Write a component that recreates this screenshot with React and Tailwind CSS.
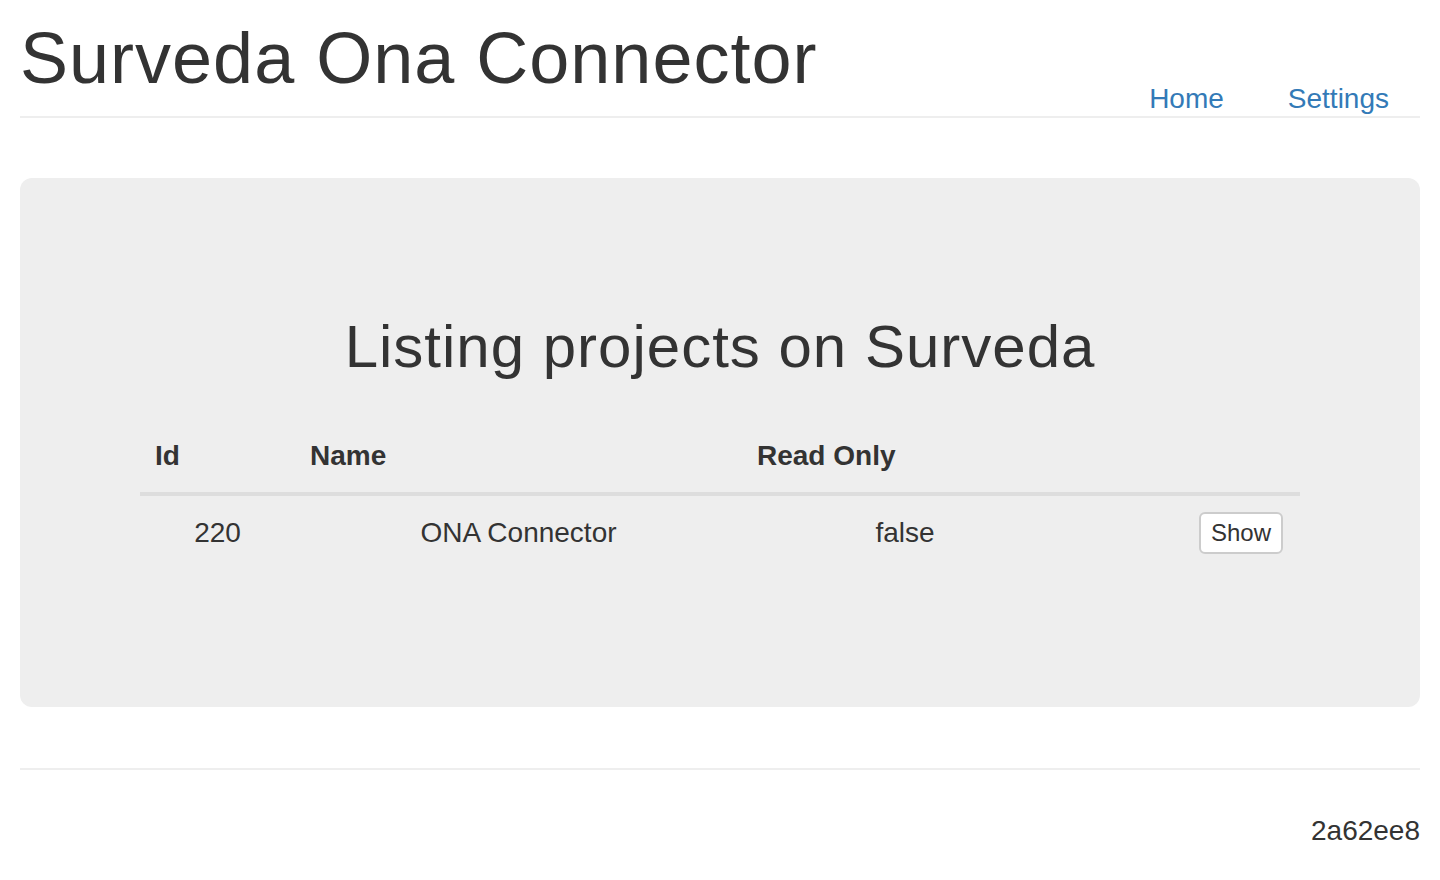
export default function App() {
  const projects = [{ id: 220, name: "ONA Connector", readOnly: false }];

  return (
    <div className="min-h-[880px] bg-white px-[20px] text-[#333] font-['Liberation_Sans',Arial,sans-serif]">
      <header className="flex items-end justify-between border-b-2 border-[#eee]">
        <h1 className="pt-[19px] pb-[18px] text-[72px] leading-[79px] tracking-[1px] font-normal">
          Surveda Ona Connector
        </h1>
        <nav className="flex gap-[2px] pb-[3px]">
          <a href="#" className="px-[31px] text-[28px] leading-[28px] text-[#337ab7]">Home</a>
          <a href="#" className="px-[31px] text-[28px] leading-[28px] text-[#337ab7]">Settings</a>
        </nav>
      </header>

      <main className="mt-[60px] rounded-[12px] bg-[#eee] px-[120px] pt-[136px] pb-[137px]">
        <h2 className="text-center text-[60px] leading-[66px] tracking-[1px] font-normal">
          Listing projects on Surveda
        </h2>
        <table className="mt-[40px] w-full border-collapse text-[28px] leading-[40px]">
          <thead>
            <tr className="border-b-4 border-[#ddd]">
              <th className="w-[155px] px-[15px] py-[16px] text-left font-bold">Id</th>
              <th className="w-[447px] px-[15px] py-[16px] text-left font-bold">Name</th>
              <th className="w-[326px] px-[15px] py-[16px] text-left font-bold">Read Only</th>
              <th className="px-[15px] py-[16px]"></th>
            </tr>
          </thead>
          <tbody>
            {projects.map((p) => (
              <tr key={p.id}>
                <td className="px-[15px] py-[16px] text-center align-middle">{p.id}</td>
                <td className="px-[15px] py-[16px] text-center align-middle">{p.name}</td>
                <td className="px-[15px] py-[16px] text-center align-middle">{String(p.readOnly)}</td>
                <td className="pl-[15px] pr-[17px] py-[16px] text-right align-middle">
                  <button className="rounded-[6px] border-2 border-[#ccc] bg-white px-[10px] py-[1px] text-[24px] leading-[36px] text-[#333]">
                    Show
                  </button>
                </td>
              </tr>
            ))}
          </tbody>
        </table>
      </main>

      <footer className="mt-[61px] border-t-2 border-[#eee] pt-[41px] text-right text-[28px] leading-[40px]">
        2a62ee8
      </footer>
    </div>
  );
}
